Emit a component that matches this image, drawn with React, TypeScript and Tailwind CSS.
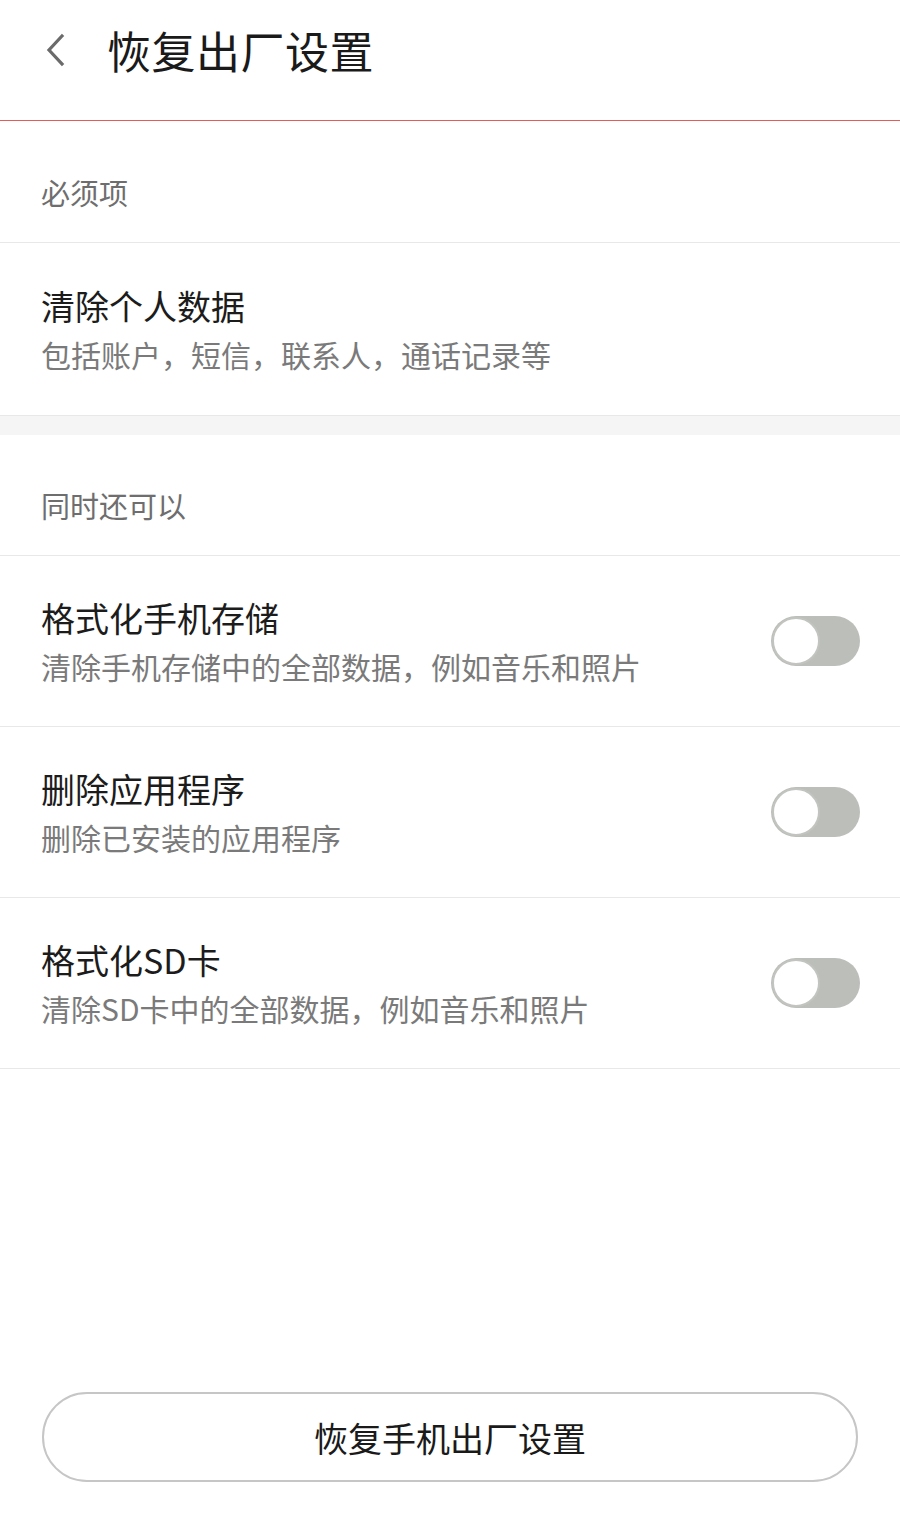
const font = { fontFamily: '"Noto Sans CJK SC", "Noto Sans", sans-serif' };

function Toggle() {
  return (
    <div className="flex h-[50px] w-[89px] shrink-0 items-center rounded-full bg-[#bcbeba] p-[1px]">
      <div className="h-[48px] w-[48px] rounded-full border-2 border-[#c2c4c0] bg-white" />
    </div>
  );
}

function Row({
  title,
  desc,
  toggle = false,
  tall = false,
}: {
  title: string;
  desc: string;
  toggle?: boolean;
  tall?: boolean;
}) {
  return (
    <div
      className={
        tall
          ? "flex h-[173px] items-center justify-between border-b border-[#e8e8e8] pl-[41px] pr-[40px]"
          : "flex h-[171px] items-center justify-between border-b border-[#e8e8e8] pl-[41px] pr-[40px]"
      }
    >
      <div className="mt-[1px] flex flex-col">
        <div className="text-[34px] leading-[48px] text-[#1c1c1c]">{title}</div>
        <div className="text-[30px] leading-[48px] text-[#7a7a7a]">{desc}</div>
      </div>
      {toggle ? <Toggle /> : null}
    </div>
  );
}

export default function App() {
  return (
    <div className="flex h-[1520px] w-[900px] flex-col bg-white" style={font}>
      <header className="flex h-[120px] items-center pb-[20px]">
        <svg className="ml-[44px] h-[34px] w-[22px]" viewBox="0 0 22 34" fill="none">
          <path d="M18 3 L5 17 L18 31" stroke="#6b6b6b" strokeWidth="3.2" strokeLinecap="square" />
        </svg>
        <h1 className="ml-[41px] text-[44px] leading-none tracking-[0.5px] text-[#1a1a1a]">恢复出厂设置</h1>
      </header>
      <div className="h-[1px] bg-[#e25c5c]" />

      <div className="flex h-[122px] items-end border-b border-[#e8e8e8] pb-[30px] pl-[41px] text-[29px] leading-[40px] text-[#6e6e6e]">
        必须项
      </div>
      <Row title="清除个人数据" desc="包括账户，短信，联系人，通话记录等" tall />

      <div className="h-[19px] bg-[#f5f5f5]" />

      <div className="flex h-[121px] items-end border-b border-[#e8e8e8] pb-[30px] pl-[41px] text-[29px] leading-[40px] text-[#6e6e6e]">
        同时还可以
      </div>
      <Row title="格式化手机存储" desc="清除手机存储中的全部数据，例如音乐和照片" toggle />
      <Row title="删除应用程序" desc="删除已安装的应用程序" toggle />
      <Row title="格式化SD卡" desc="清除SD卡中的全部数据，例如音乐和照片" toggle />

      <div className="flex-1" />

      <div className="px-[42px] pb-[38px]">
        <button
          type="button"
          className="flex h-[90px] w-full items-center justify-center rounded-full border-2 border-[#c6c6c6] bg-white text-[34px] text-[#1a1a1a]"
          style={font}
        >
          恢复手机出厂设置
        </button>
      </div>
    </div>
  );
}
